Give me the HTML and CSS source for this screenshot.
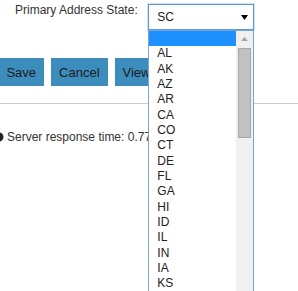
FILE: index.html
```html
<!DOCTYPE html>
<html lang="en">
<head>
  <meta charset="UTF-8">
  <title>Primary Address</title>
  <link rel="stylesheet" href="styles.css">
</head>
<body>
  <div class="form-row">
    <label class="field-label">Primary Address State:</label>
    <div class="select-wrap">
      <div class="select-box">
        <span>SC</span>
        <svg class="select-arrow" width="7" height="5" viewBox="0 0 7 5"><path d="M0 0H7L3.5 5Z" fill="#000"/></svg>
      </div>

      <div class="dropdown">
        <ul class="options">
          <li class="highlight"></li>
          <li>AL</li>
          <li>AK</li>
          <li>AZ</li>
          <li>AR</li>
          <li>CA</li>
          <li>CO</li>
          <li>CT</li>
          <li>DE</li>
          <li>FL</li>
          <li>GA</li>
          <li>HI</li>
          <li>ID</li>
          <li>IL</li>
          <li>IN</li>
          <li>IA</li>
          <li>KS</li>
        </ul>
        <div class="scrollbar">
          <div class="scroll-up">
            <svg width="7" height="4" viewBox="0 0 7 4"><path d="M0 4L3.5 0L7 4Z" fill="#a3a3a3"/></svg>
          </div>
          <div class="scroll-thumb"></div>
        </div>
      </div>
    </div>
  </div>

  <div class="actions">
    <button class="btn">Save</button>
    <button class="btn">Cancel</button>
    <button class="btn">View</button>
  </div>

  <hr class="divider">

  <p class="status">
    <svg class="status-icon" width="10" height="10" viewBox="0 0 10 10"><circle cx="5" cy="5" r="4.5" fill="#222"/></svg>
    Server response time: 0.77 seconds
  </p>
</body>
</html>
```
FILE: styles.css
```css
body {
  font-family: "Liberation Sans", Arial, sans-serif;
  margin: 0;
  height: 291px;
  overflow: hidden;
  background-color: #fff;
  color: #333;
}

.form-row {
  display: flex;
  align-items: flex-start;
  padding-top: 4px;
}

.field-label {
  font-size: 12px;
  line-height: 12px;
  margin-left: 15px;
  margin-top: 0.4px;
  color: #333;
}

.select-wrap {
  position: relative;
  margin-left: 10.6px;
}

.select-box {
  box-sizing: border-box;
  width: 106px;
  height: 26px;
  display: flex;
  align-items: center;
  justify-content: space-between;
  padding: 0 5px 0 8px;
  border: 1px solid #5b9bd5;
  box-shadow: 0 0 0 1px #cfe0f5;
  background-color: #fff;
  font-size: 12px;
  color: #222;
}

.dropdown {
  position: absolute;
  top: 26px;
  left: 0;
  z-index: 5;
  box-sizing: border-box;
  width: 106px;
  height: 261px;
  display: flex;
  border: 1px solid #7ea3da;
  border-bottom: none;
  background-color: #fff;
  overflow: hidden;
}

.options {
  list-style: none;
  margin: 0;
  padding: 0;
  width: 87px;
}

.options li {
  height: 15.33px;
  line-height: 15.33px;
  padding-left: 8px;
  font-size: 12px;
  color: #222;
}

.options li.highlight {
  background-color: #1e90ff;
}

.scrollbar {
  width: 17px;
  background-color: #f0f0f0;
  display: flex;
  flex-direction: column;
  align-items: center;
}

.scroll-up {
  height: 16px;
  display: flex;
  align-items: center;
  justify-content: center;
}

.scroll-thumb {
  box-sizing: border-box;
  width: 13px;
  height: 90px;
  margin-top: 1px;
  background-color: #c1c1c1;
  border: 1px solid #a8a8a8;
}

.actions {
  display: flex;
  gap: 7px;
  margin-top: 28px;
  margin-left: -1.6px;
}

.btn {
  height: 28px;
  padding: 0 8px;
  border: none;
  background-color: #3c8dbc;
  color: #1b1b1b;
  font-family: "Liberation Sans", Arial, sans-serif;
  font-size: 13px;
}

.divider {
  margin: 17px 0 0;
  border: none;
  border-top: 1px solid #ccc;
}

.status {
  display: flex;
  align-items: center;
  margin: 26px 0 0;
  font-size: 12px;
  line-height: 14px;
  color: #333;
  white-space: nowrap;
}

.status-icon {
  margin-left: -6px;
  margin-right: 3px;
}
```
